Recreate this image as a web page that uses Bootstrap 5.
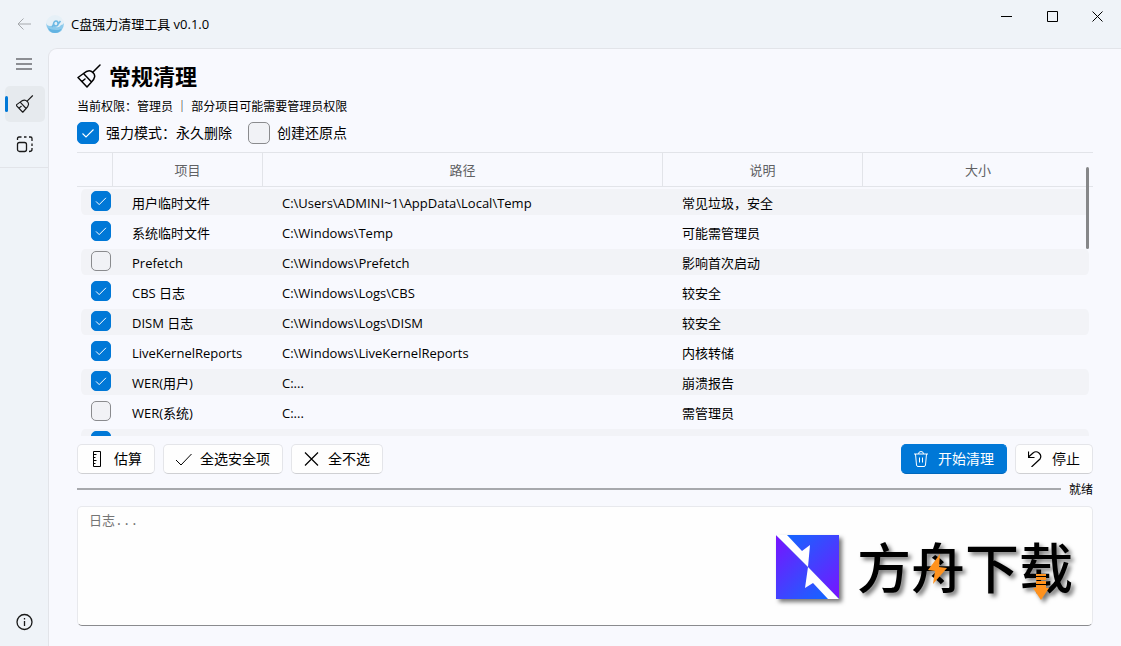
<!DOCTYPE html>
<html lang="zh-CN">
<head>
<meta charset="utf-8">
<meta name="viewport" content="width=device-width, initial-scale=1">
<title>C盘强力清理工具 v0.1.0</title>
<link rel="stylesheet" href="https://cdn.jsdelivr.net/npm/bootstrap@5.3.0/dist/css/bootstrap.min.css">
<style>
  :root { --accent: #0078d7; --line: #e2e4e9; }
  body { font-family: "Open Sans", "Noto Sans CJK SC", sans-serif; font-size: 13px; line-height: 16px; color: #000; background: #eff3f8; }
  svg { display: block; fill: none; stroke: currentColor; flex-shrink: 0; }
  .titlebar { height: 48px; }
  .app-id { padding-left: 16px; gap: 14px; }
  .app-name { gap: 7px; }
  .back { color: #a5a8ac !important; }
  .app-icon { stroke: none; }
  .plain { border: 0; padding: 0; background: none; color: inherit; }
  .winbtn { width: 46px; height: 34px; display: grid; place-items: center; }
  .side { width: 48px; padding-bottom: 6px; }
  .side-group { gap: 4px; padding-bottom: 5px; border-bottom: 1px solid var(--line); margin-top: -2px; }
  .side-link { width: 40px; height: 36px; margin-left: 5px; border-radius: 5px; color: #1a1a1a; display: grid; place-items: center; position: relative; }
  .side-link.active { background: #e6eaee; }
  .side-link.active::before { content: ""; position: absolute; left: 0; top: 10px; width: 3px; height: 16px; border-radius: 2px; background: var(--accent); }
  .panel { background: #f8f9fe; border: solid var(--line); border-width: 1px 0 0 1px; border-top-left-radius: 9px; padding: 13px 28px 20px; gap: 8px; }
  .panel h1 { font-size: 22px; line-height: 28px; font-weight: 700; gap: 8px; }
  .sub { font-size: 12px; padding-top: 1px; margin-bottom: -1px; }
  .opts { font-size: 14px; line-height: 22px; gap: 16px; }
  .opt { gap: 7px; }
  .form-check-input { margin: 0; width: 20px; height: 20px; border-color: #8a8b8e; background-color: #f1f2f6; flex-shrink: 0; }
  .opt .form-check-input { width: 22px; height: 22px; }
  .form-check-input[type=checkbox] { border-radius: 5px; }
  .form-check-input:checked { background-color: var(--accent); border-color: var(--accent); }
  .form-check-input:checked[type=checkbox] { background-image: url("data:image/svg+xml,%3Csvg xmlns='http://www.w3.org/2000/svg' viewBox='0 0 20 20'%3E%3Cpath d='M4.500 10.500l3.500 3.500 7.500-7.500' fill='none' stroke='%23fff' stroke-width='1.100'/%3E%3C/svg%3E"); }
  .grid-scroll { overflow: auto; scrollbar-width: none; height: 100%; }
  .grid-scroll::-webkit-scrollbar { display: none; }
  .items { border-collapse: separate; border-spacing: 0; table-layout: fixed; --bs-table-bg: transparent; }
  .items th { position: sticky; top: 0; z-index: 1; height: 35px; padding: 0; font-weight: 400; text-align: center; vertical-align: middle; color: #606164; background: #f8f9fe !important; border: solid var(--line); border-width: 1px 1px 1px 0; }
  .items th:last-child { border-right: 0; }
  .items td { height: 30px; padding: 2px 0 0 19px; border: solid transparent; border-width: 2px 0; background-clip: padding-box; vertical-align: middle; color: #000; }
  .items > tbody > tr:nth-child(odd) > td { background-color: #f2f3f7; box-shadow: none; color: #000; }
  .items td:first-child { border-left-width: 4px; border-radius: 8px 0 0 8px; padding: 2px 0 0 10px; vertical-align: top; }
  .items td:last-child { border-right-width: 4px; border-radius: 0 8px 8px 0; }
  .c-check { width: 36px; } .c-name { width: 150px; } .c-path { width: 400px; } .c-note { width: 200px; }
  .thumb { position: absolute; right: 4px; top: 15px; width: 3px; height: 82px; border-radius: 2px; background: #868789; z-index: 2; }
  .act { height: 30px; font-size: 14px; line-height: 20px; padding: 0 12px; display: flex; align-items: center; gap: 8px; border: 1px solid #e4e5e9; border-bottom-color: #cfd0d3; border-radius: 5px; background: #fefefe; color: #000; }
  .act.go { background: var(--accent); border-color: var(--accent); border-bottom-color: #0068bd; color: #fff; }
  .bar { height: 2px; background: #a7a9ad; margin-bottom: 2px; }
  .state { font-size: 12px; line-height: 16px; }
  .log { height: 120px; resize: none; flex-shrink: 0; font-family: "Liberation Mono", "Noto Sans CJK SC", monospace; font-size: 13px; line-height: 16px; padding: 7px 11px; border: 1px solid #e8e9ed; border-bottom-color: #8a8b8e; border-radius: 5px; background: #fefefe; }
  .log::placeholder { color: #757575; }
  .stamp { position: absolute; right: 31px; bottom: 36px; pointer-events: none; stroke: none; overflow: visible; filter: drop-shadow(3px 3px 2px #0008); }
  .stamp text { font: 500 54px "Noto Sans CJK SC", sans-serif; fill: #000; }
</style>
</head>
<body class="vh-100 d-flex flex-column overflow-hidden">
<header class="titlebar d-flex align-items-start flex-shrink-0">
  <div class="app-id d-flex align-items-center h-100">
    <button class="plain back" aria-label="返回"><svg width="16" height="16" viewBox="0 0 16 16"><path d="M15 8H2M7.500 2.500L2 8l5.500 5.500"/></svg></button>
    <div class="app-name d-flex align-items-center">
      <svg class="app-icon" width="18" height="18" viewBox="0 0 18 18"><circle cx="9" cy="9" r="9" fill="#e6f0f7"/><path d="M0 8q1 3 4 3 3 0 3.500-1.500L10 12q3 1 5-2 2 0 3-2-.5 10-9 10Q1 18 0 8z" fill="#8ccaec"/><path d="M2 13q3 2 8 2t6-2q-2 5-7 5t-7-5z" fill="#62b3e2"/><path d="M6 12q1-1 1.500-3Q8 6 10 6t2 2.500-2 2.500-2.500-2M11.500 10l3-4" fill="none" stroke="#6db9e4" stroke-width="1.500"/></svg>
      <span>C盘强力清理工具 v0.1.0</span>
    </div>
  </div>
  <div class="d-flex ms-auto">
    <button class="plain winbtn" aria-label="最小化"><svg width="12" height="12"><path d="M1 5.500h11"/></svg></button>
    <button class="plain winbtn" aria-label="最大化"><svg width="12" height="12"><path d="M1.500.500h10v10h-10z"/></svg></button>
    <button class="plain winbtn" aria-label="关闭"><svg width="12" height="12"><path d="M.5.500l10 10M10.500.500l-10 10"/></svg></button>
  </div>
</header>
<div class="d-flex flex-grow-1" style="min-height:0">
  <nav class="side d-flex flex-column flex-shrink-0">
    <div class="side-group d-flex flex-column">
      <button class="plain side-link" aria-label="菜单"><svg width="18" height="14"><path d="M0 2h16M0 7h16M0 12h16" stroke="#6c6e71" stroke-width="1.500"/></svg></button>
      <a href="#" class="side-link active" aria-label="常规清理"><svg width="18" height="18" viewBox="1 0 24 24" stroke-width="1.500"><use href="#broom"/></svg></a>
      <a href="#" class="side-link" aria-label="扩展"><svg width="18" height="18" viewBox="0 0 18 18" stroke-width="1.300"><rect x="1.500" y="7.500" width="9" height="9" rx="2"/><path d="M1.500 5V3.500Q1.500 2 3 2h2.500M8 2h2.500M13 2h1.500Q16 2 16 3.500V6M16 8.500V11M16 13v1.500q0 2-3 2"/></svg></a>
    </div>
    <a href="#" class="side-link mt-auto" aria-label="关于"><svg width="18" height="18" viewBox="0 0 18 18" stroke-width="1.300"><circle cx="8.500" cy="9" r="7.500"/><path d="M8.500 8v5M8.500 5v1.500"/></svg></a>
  </nav>
  <main class="panel d-flex flex-column flex-grow-1 position-relative" style="min-width:0">
    <h1 class="d-flex align-items-center m-0">
      <svg width="24" height="24" viewBox="0 0 24 24" stroke-width="1.500"><g id="broom"><path d="M23 1l-7.500 7.500M6.500 9.500Q12 4.500 16 8.500T14.500 18L10 23 1 13.500zM6.500 9.500l8 8.500M5 17.500L8 15" stroke-linejoin="round" stroke-linecap="round"/></g></svg>
      <span>常规清理</span>
    </h1>
    <div class="sub">当前权限：管理员 ｜ 部分项目可能需要管理员权限</div>
    <div class="opts d-flex">
      <div class="opt d-flex align-items-center"><input class="form-check-input" type="checkbox" id="force" checked><label for="force">强力模式：永久删除</label></div>
      <div class="opt d-flex align-items-center"><input class="form-check-input" type="checkbox" id="restore"><label for="restore">创建还原点</label></div>
    </div>
    <div class="position-relative flex-grow-1" style="min-height:0">
      <div class="grid-scroll">
        <table class="table table-striped items mb-0">
          <thead><tr><th class="c-check" aria-label="选择"></th><th class="c-name">项目</th><th class="c-path">路径</th><th class="c-note">说明</th><th>大小</th></tr></thead>
          <tbody>
            <tr><td><input class="form-check-input" type="checkbox" aria-label="用户临时文件" checked></td><td>用户临时文件</td><td>C:\Users\ADMINI~1\AppData\Local\Temp</td><td>常见垃圾，安全</td><td></td></tr>
            <tr><td><input class="form-check-input" type="checkbox" aria-label="系统临时文件" checked></td><td>系统临时文件</td><td>C:\Windows\Temp</td><td>可能需管理员</td><td></td></tr>
            <tr><td><input class="form-check-input" type="checkbox" aria-label="Prefetch"></td><td>Prefetch</td><td>C:\Windows\Prefetch</td><td>影响首次启动</td><td></td></tr>
            <tr><td><input class="form-check-input" type="checkbox" aria-label="CBS 日志" checked></td><td>CBS 日志</td><td>C:\Windows\Logs\CBS</td><td>较安全</td><td></td></tr>
            <tr><td><input class="form-check-input" type="checkbox" aria-label="DISM 日志" checked></td><td>DISM 日志</td><td>C:\Windows\Logs\DISM</td><td>较安全</td><td></td></tr>
            <tr><td><input class="form-check-input" type="checkbox" aria-label="LiveKernelReports" checked></td><td>LiveKernelReports</td><td>C:\Windows\LiveKernelReports</td><td>内核转储</td><td></td></tr>
            <tr><td><input class="form-check-input" type="checkbox" aria-label="WER(用户)" checked></td><td>WER(用户)</td><td>C:...</td><td>崩溃报告</td><td></td></tr>
            <tr><td><input class="form-check-input" type="checkbox" aria-label="WER(系统)"></td><td>WER(系统)</td><td>C:...</td><td>需管理员</td><td></td></tr>
            <tr><td><input class="form-check-input" type="checkbox" aria-label="其他" checked></td><td></td><td></td><td></td><td></td></tr>
          </tbody>
        </table>
      </div>
      <div class="thumb"></div>
    </div>
    <div class="d-flex gap-2">
      <button class="act"><svg width="16" height="16"><path d="M3.500.500h7v15h-7zM3.500 3.500h3M3.500 6.500h2M3.500 9.500h3M3.500 12.500h2"/></svg>估算</button>
      <button class="act"><svg width="16" height="16"><path d="M0 9l5 5L15.500 3"/></svg>全选安全项</button>
      <button class="act"><svg width="16" height="16"><path d="M1 1.500l13 13M14 1.500l-13 13" stroke-width="1.200"/></svg>全不选</button>
      <button class="act go ms-auto"><svg width="16" height="16"><path d="M0 3h14M4.500 3q0-2.500 2.500-2.500T9.500 3M1.500 3l1 11q.2 1.500 1.500 1.500h6q1.300 0 1.500-1.500l1-11M5.500 6.500v5M8.500 6.500v5"/></svg>开始清理</button>
      <button class="act"><svg width="16" height="16"><path d="M.5.500v6h6M.5 6L5 2q3-2.500 6 0t1 6l-8.500 8" stroke-width="1.200"/></svg>停止</button>
    </div>
    <div class="d-flex align-items-center gap-2"><div class="bar flex-grow-1" role="progressbar" aria-label="进度"></div><span class="state">就绪</span></div>
    <textarea class="form-control log" placeholder="日志..." aria-label="日志"></textarea>
    <svg class="stamp" width="320" height="80" viewBox="0 0 320 80">
      <defs>
        <linearGradient id="g1" x1="0" y1="0" x2="1" y2="1"><stop offset="0" stop-color="#0a6cff"/><stop offset=".3" stop-color="#2a55ff"/><stop offset="1" stop-color="#7a12ff"/></linearGradient>
        <linearGradient id="g2" x1="0" y1="0" x2="1" y2="1"><stop offset="0" stop-color="#7a12ff"/><stop offset=".7" stop-color="#2a55ff"/><stop offset="1" stop-color="#0a6cff"/></linearGradient>
      </defs>
      <path d="M6 5h63v64z" fill="url(#g1)"/>
      <path d="M6 5v64h63z" fill="url(#g2)"/>
      <path d="M6 5h11l15 16 8-6-2 22 31 32H58L43 53l-8 5 3-21z" fill="#fff"/>
      <text x="87" y="59">方舟下载</text>
      <path d="M170 24l-12 16 7 1-2 13 14-16-8-1zM266 44h10v2h-10zM266 47h10v3h-10zM266 51h10v3h-10zM266 55h10v3h3l-8 12-8-12h3z" fill="#ff921e"/>
    </svg>
  </main>
</div>
<script src="https://cdn.jsdelivr.net/npm/bootstrap@5.3.0/dist/js/bootstrap.bundle.min.js"></script>
</body>
</html>
